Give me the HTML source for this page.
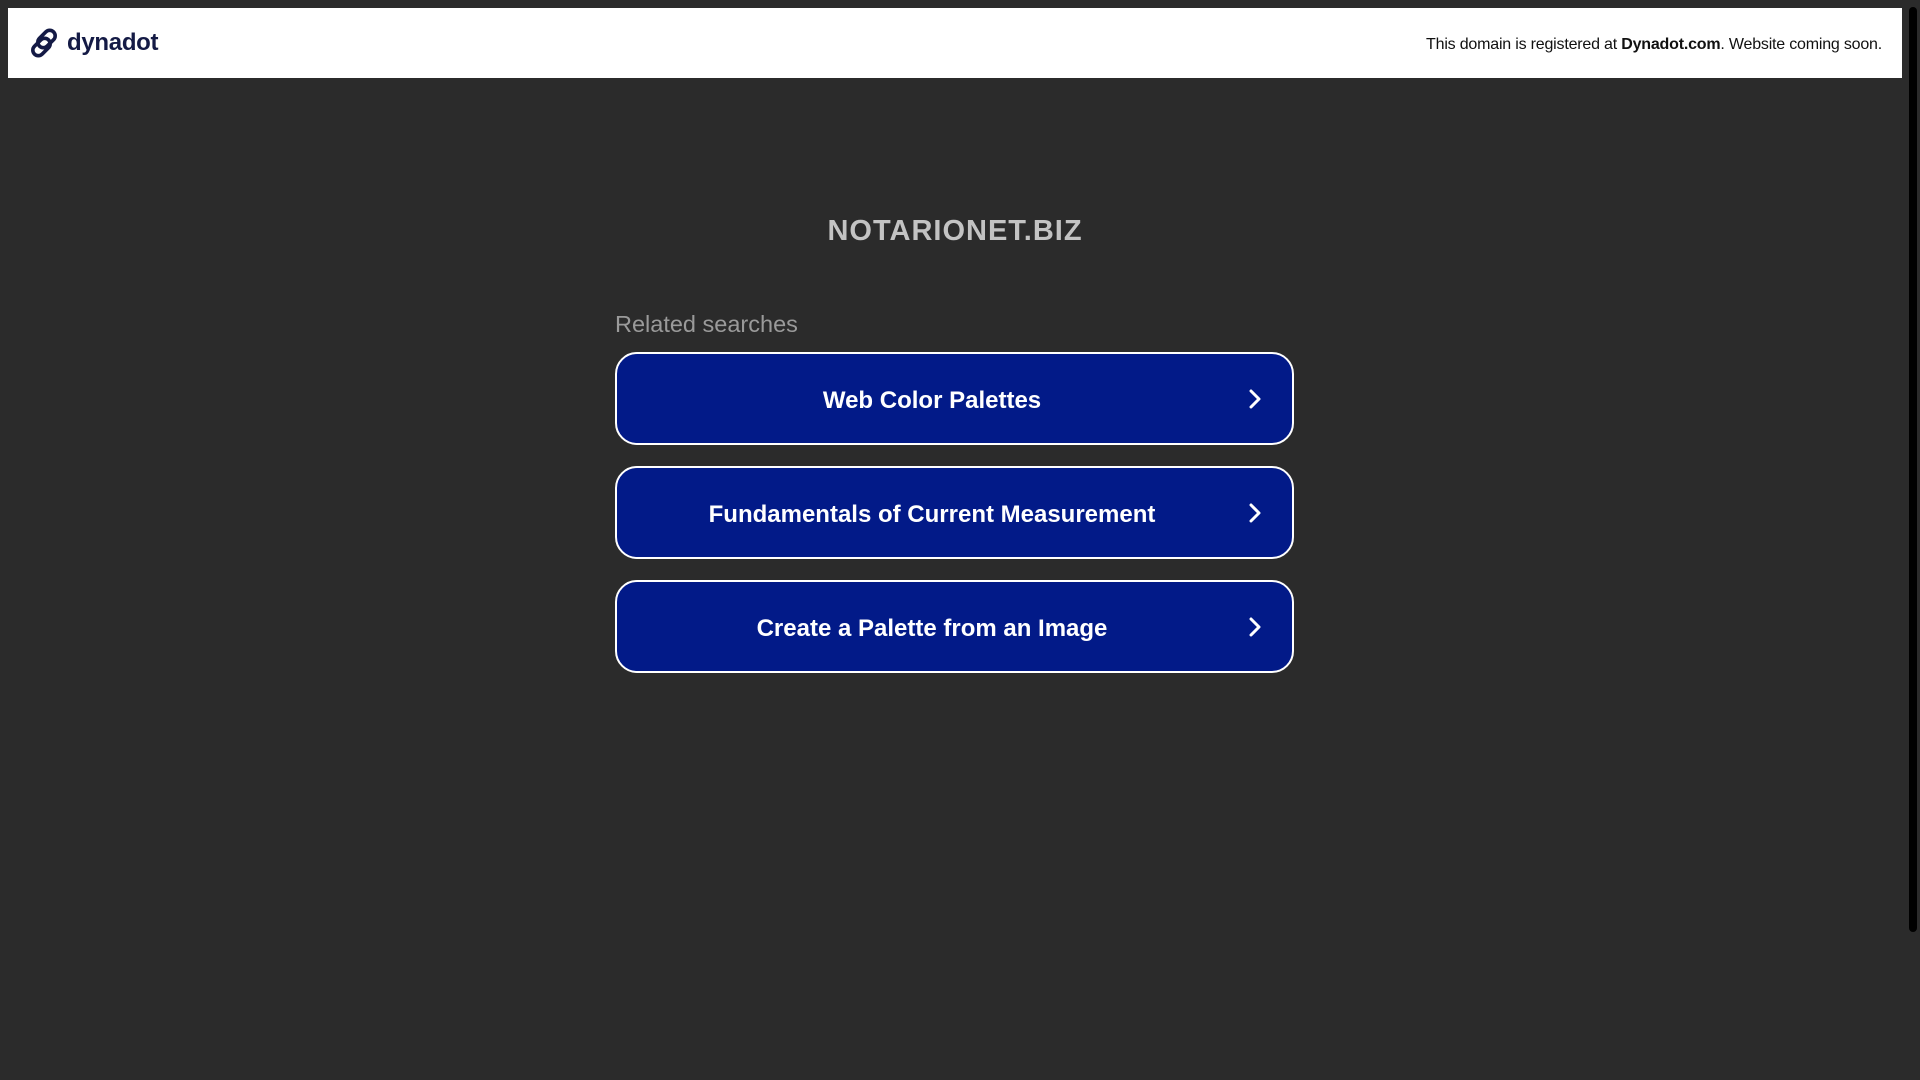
<!DOCTYPE html>
<html><head><meta charset="utf-8"><style>
html,body{margin:0;padding:0;width:1920px;height:1080px;overflow:hidden;background:#2b2b2b;font-family:"Liberation Sans",Arial,sans-serif}
.hdr{position:absolute;left:8px;top:8px;width:1894px;height:70px;background:#fff}
.logo{position:absolute;left:20px;top:19px;display:flex;align-items:center}
.logo span{font-weight:bold;font-size:24px;color:#141a45;margin-left:7px;letter-spacing:-0.3px}
.note{position:absolute;right:20px;top:28px;font-size:16px;color:#111;letter-spacing:-0.2px}
.sb{position:absolute;left:1909px;top:7px;width:8px;height:925px;background:#000;border-radius:4px}
h1{position:absolute;left:0;width:1910px;top:215px;margin:0;text-align:center;font-size:29px;color:#c3c3c3;letter-spacing:1px;font-weight:bold}
.rel{position:absolute;left:615px;top:311px;font-size:23.5px;color:#9a9a9a}
.btn{position:absolute;left:615px;width:675px;height:89px;border:2px solid #fff;border-radius:22px;background:#021a88;color:#fff;font-weight:bold;font-size:24px}
.btn .t{position:absolute;left:0;width:630px;top:2px;line-height:89px;text-align:center}
.btn svg{position:absolute;left:631px;top:35px}
</style></head><body>
<div class="hdr">
 <div class="logo"><svg width="32" height="32" viewBox="0 0 32 32" fill="none" stroke="#141a45" stroke-width="3.6" stroke-linecap="round">
  <rect x="13" y="2" width="11" height="20" rx="5.5" transform="rotate(45 18.5 12)"/>
  <rect x="8" y="10" width="11" height="20" rx="5.5" transform="rotate(45 13.5 20)"/>
 </svg><span>dynadot</span></div>
 <div class="note">This domain is registered at <b>Dynadot.com</b>. Website coming soon.</div>
</div>
<div class="sb"></div>
<h1>NOTARIONET.BIZ</h1>
<div class="rel">Related searches</div>
<div class="btn" style="top:352px"><div class="t">Web Color Palettes</div><svg width="14" height="20" viewBox="0 0 14 20"><path d="M3 2l8 8-8 8" stroke="#fff" stroke-width="3" fill="none" stroke-linecap="round" stroke-linejoin="round"/></svg></div>
<div class="btn" style="top:466px"><div class="t">Fundamentals of Current Measurement</div><svg width="14" height="20" viewBox="0 0 14 20"><path d="M3 2l8 8-8 8" stroke="#fff" stroke-width="3" fill="none" stroke-linecap="round" stroke-linejoin="round"/></svg></div>
<div class="btn" style="top:580px"><div class="t">Create a Palette from an Image</div><svg width="14" height="20" viewBox="0 0 14 20"><path d="M3 2l8 8-8 8" stroke="#fff" stroke-width="3" fill="none" stroke-linecap="round" stroke-linejoin="round"/></svg></div>
</body></html>
